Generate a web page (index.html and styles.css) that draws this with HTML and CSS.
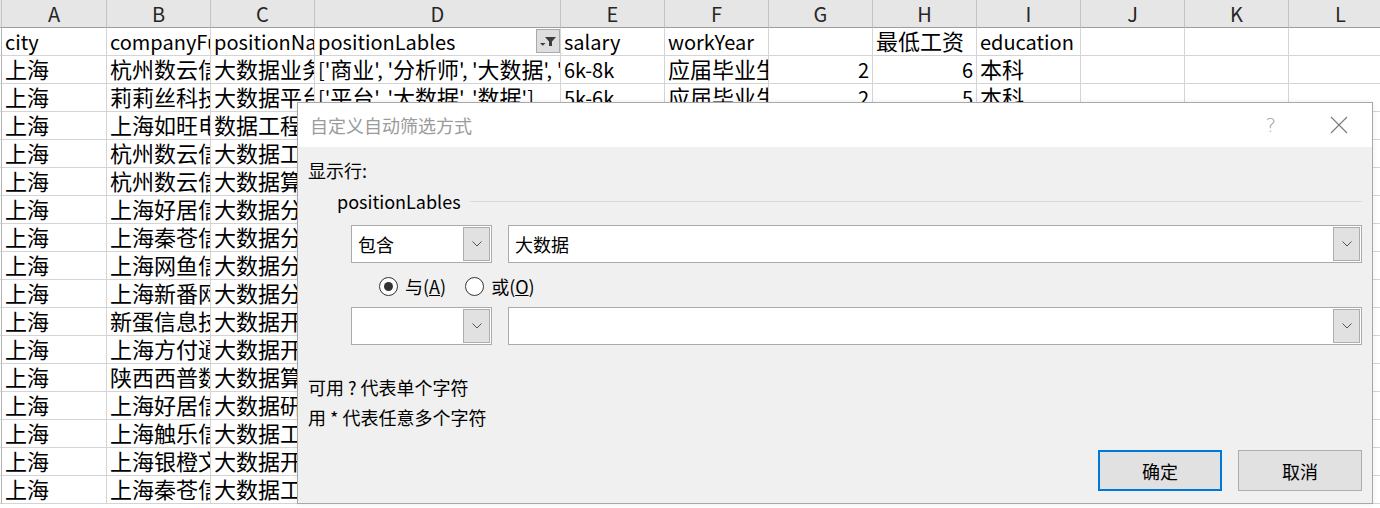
FILE: index.html
```html
<!doctype html>
<html>
	<head>
		<title>自定义自动筛选方式</title>
		<meta charset="utf-8" />
		<link rel="stylesheet" href="styles.css">
	</head>
	<body>
		<div id="sheet">
			<div class="row head" id="colhead"></div>
			<div id="rows"></div>

			<div class="dialog">
				<div class="titlebar">
					<span class="title">自定义自动筛选方式</span>
					<span class="help">?</span>
					<svg class="close" width="18" height="18" viewBox="0 0 18 18"><path d="M1 1L17 17M17 1L1 17" stroke="#7a7a7a" stroke-width="1.1" fill="none"/></svg>
				</div>
				<div class="dlgbody">
					<div class="label">显示行:</div>
					<div class="group"><span>positionLables</span><div class="sep"></div></div>

					<div class="crit">
						<div class="combo small"><span class="val">包含</span><div class="drop"><svg width="10" height="6" viewBox="0 0 10 6"><path d="M0.5 0.5L5 5L9.5 0.5" stroke="#555" fill="none"/></svg></div></div>
						<div class="combo wide"><span class="val">大数据</span><div class="drop"><svg width="10" height="6" viewBox="0 0 10 6"><path d="M0.5 0.5L5 5L9.5 0.5" stroke="#555" fill="none"/></svg></div></div>
					</div>

					<div class="radios">
						<span class="radio on"><i></i>与(<u>A</u>)</span>
						<span class="radio"><i></i>或(<u>O</u>)</span>
					</div>

					<div class="crit second">
						<div class="combo small"><span class="val"></span><div class="drop"><svg width="10" height="6" viewBox="0 0 10 6"><path d="M0.5 0.5L5 5L9.5 0.5" stroke="#555" fill="none"/></svg></div></div>
						<div class="combo wide"><span class="val"></span><div class="drop"><svg width="10" height="6" viewBox="0 0 10 6"><path d="M0.5 0.5L5 5L9.5 0.5" stroke="#555" fill="none"/></svg></div></div>
					</div>

					<div class="hint">
						<div>可用 ? 代表单个字符</div>
						<div>用 * 代表任意多个字符</div>
					</div>

					<div class="buttons">
						<div class="btn ok">确定</div>
						<div class="btn">取消</div>
					</div>
				</div>
			</div>
		</div>

		<script>
			// COLUMN HEADERS
			var letters = "ABCDEFGHIJKL";
			var head = document.getElementById("colhead");
			var html = "<div class='cell stub'></div>";
			for (var i=0; i<letters.length; i++) {
				html += "<div class='cell'>" + letters[i] + "</div>";
			}
			head.innerHTML = html;

			// SHEET DATA
			var data = [
				["city", "companyFullName", "positionName", "positionLables", "salary", "workYear", "", "最低工资", "education"],
				["上海", "杭州数云信息技术有限公司", "大数据业务分析师", "['商业', '分析师', '大数据', '数据']", "6k-8k", "应届毕业生", "2", "6", "本科"],
				["上海", "莉莉丝科技(上海)有限公司", "大数据平台开发", "['平台', '大数据', '数据']", "5k-6k", "应届毕业生", "2", "5", "本科"],
				["上海", "上海如旺电子商务有限公司", "数据工程师"],
				["上海", "杭州数云信息技术有限公司", "大数据工程师"],
				["上海", "杭州数云信息技术有限公司", "大数据算法工程师"],
				["上海", "上海好居信息技术有限公司", "大数据分析师"],
				["上海", "上海秦苍信息科技有限公司", "大数据分析师"],
				["上海", "上海网鱼信息科技有限公司", "大数据分析师"],
				["上海", "上海新番网络科技有限公司", "大数据分析师"],
				["上海", "新蛋信息技术(中国)有限公司", "大数据开发工程师"],
				["上海", "上海方付通商务服务有限公司", "大数据开发工程师"],
				["上海", "陕西西普数据通信股份有限公司", "大数据算法工程师"],
				["上海", "上海好居信息技术有限公司", "大数据研发工程师"],
				["上海", "上海触乐信息科技有限公司", "大数据工程师"],
				["上海", "上海银橙文化传媒股份有限公司", "大数据开发工程师"],
				["上海", "上海秦苍信息科技有限公司", "大数据工程师"]
			];

			// chinese runs are drawn a bit larger than latin, as in the sheet font
			function han(s) {
				return s.replace(/([\u4e00-\u9fff]+)/g, "<span class='han'>$1</span>");
			}

			var filter = "<span class='filter'><svg width='24' height='24' viewBox='0 0 24 24'><path d='M9 8H20L16 12.5V17H13V12.5Z' fill='#3c3c3c'/><path d='M4 14H9.5L6.75 16.75Z' fill='#3c3c3c'/></svg></span>";
			var rows = "";
			for (var r=0; r<data.length; r++) {
				rows += "<div class='row'><div class='cell stub'></div>";
				for (var c=0; c<12; c++) {
					var v = han(data[r][c] || "");
					var cls = "cell";
					if (r>0 && (c==6 || c==7)) cls += " num";
					if (r==0 && c==3) {
						rows += "<div class='" + cls + " hasfilter'><span class='txt'>" + v + "</span>" + filter + "</div>";
					} else {
						rows += "<div class='" + cls + "'><span class='txt'>" + v + "</span></div>";
					}
				}
				rows += "</div>";
			}
			document.getElementById("rows").innerHTML = rows;
		</script>
	</body>
</html>
```

FILE: styles.css
```css
body {
	margin: 0;
	background-color: #fff;
	font-family: "Noto Sans CJK SC", "Noto Sans", sans-serif;
	overflow: hidden;
}

#sheet {
	position: relative;
	width: 1380px;
	height: 508px;
	overflow: hidden;
}

.row {
	display: grid;
	grid-template-columns: 2px 105px 104px 104px 246px 104px 104px 104px 104px 104px 104px 104px 104px;
	height: 28px;
}

.cell {
	box-sizing: border-box;
	border-right: 1px solid #d4d4d4;
	border-bottom: 1px solid #d4d4d4;
	font-size: 20px;
	line-height: 27px;
	padding: 0 3px;
	white-space: nowrap;
	overflow: hidden;
	color: #000;
}

.cell .han {
	font-size: 22px;
	line-height: 20px;
}

.cell.stub {
	padding: 0;
	border-right-color: #b4b4b4;
}

.cell.num {
	text-align: right;
}

.hasfilter {
	display: flex;
	justify-content: space-between;
	padding-right: 0;
}

.filter {
	flex: none;
	box-sizing: border-box;
	width: 24px;
	height: 24px;
	margin-top: 1px;
	border: 1px solid #a9a9a9;
	background-color: #dedede;
}

.filter svg {
	display: block;
	margin: -1px 0 0 -1px;
}

.head .cell {
	background-color: #e6e6e6;
	border-right-color: #c3c3c3;
	border-bottom-color: #9e9e9e;
	text-align: center;
	color: #262626;
	font-size: 20px;
}

/* DIALOG */

.dialog {
	position: absolute;
	left: 297px;
	top: 102px;
	width: 1076px;
	height: 402px;
	box-sizing: border-box;
	border: 1px solid #a8a8a8;
	background-color: #f0f0f0;
	font-size: 18px;
	color: #000;
	box-shadow: 0 0 6px rgba(0,0,0,0.08);
}

.titlebar {
	height: 44px;
	background-color: #fff;
	display: flex;
	align-items: center;
	padding-left: 12px;
	color: #9b9b9b;
}

.title {
	flex: 1;
	font-size: 18px;
}

.help {
	color: #a0a0a0;
	font-family: "DejaVu Sans", sans-serif;
	font-weight: 300;
	font-size: 20px;
	margin-right: 54px;
}

.close {
	margin-right: 24px;
}

.dlgbody {
	padding: 0 10px 0 10px;
}

.label {
	line-height: 24px;
	margin-top: 11px;
}

.group {
	display: flex;
	align-items: center;
	line-height: 24px;
	margin-top: 7px;
	padding-left: 29px;
}

.sep {
	flex: 1;
	height: 1px;
	background-color: #d9d9d9;
	margin-left: 9px;
}

.crit {
	display: flex;
	gap: 16px;
	margin-top: 12px;
	padding-left: 43px;
}

.crit.second {
	margin-top: 9px;
}

.combo {
	box-sizing: border-box;
	height: 38px;
	border: 1px solid #ababab;
	background-color: #fff;
	display: flex;
	align-items: center;
	padding: 1px;
}

.combo.small {
	width: 141px;
}

.combo.wide {
	flex: 1;
}

.val {
	flex: 1;
	padding-left: 5px;
	line-height: 30px;
}

.drop {
	box-sizing: border-box;
	width: 27px;
	height: 34px;
	border: 1px solid #adadad;
	background-color: #e1e1e1;
	display: flex;
	align-items: center;
	justify-content: center;
}

.radios {
	display: flex;
	gap: 19px;
	margin-top: 11px;
	padding-left: 71px;
	line-height: 24px;
}

.radio {
	display: flex;
	align-items: center;
}

.radio i {
	box-sizing: border-box;
	width: 19px;
	height: 19px;
	border: 1px solid #333;
	border-radius: 50%;
	background-color: #fff;
	margin-right: 7px;
	display: flex;
	align-items: center;
	justify-content: center;
}

.radio.on i::after {
	content: "";
	width: 9px;
	height: 9px;
	border-radius: 50%;
	background-color: #333;
}

.hint {
	margin-top: 27px;
	line-height: 30px;
}

.buttons {
	display: flex;
	justify-content: flex-end;
	gap: 16px;
	margin-top: 18px;
}

.btn {
	box-sizing: border-box;
	width: 124px;
	height: 41px;
	border: 1px solid #adadad;
	background-color: #e1e1e1;
	display: flex;
	align-items: center;
	justify-content: center;
}

.btn.ok {
	border: 2px solid #0078d7;
}
```
